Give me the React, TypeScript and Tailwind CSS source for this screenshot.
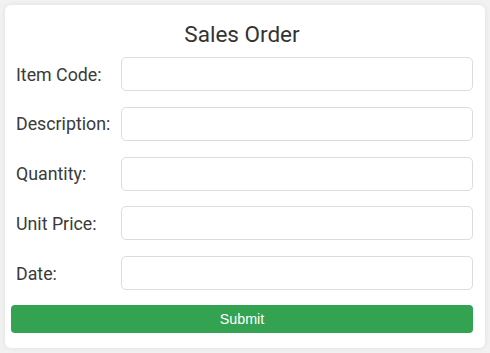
import React from 'react';

const fields = ['Item Code:', 'Description:', 'Quantity:', 'Unit Price:', 'Date:'];

export default function App() {
  return (
    <div className="min-h-[353px] w-[490px] bg-[#f2f2f2] pt-[5px] pl-[5px] font-['Roboto',sans-serif]">
      <div className="w-[480px] rounded-md bg-white pt-[13px] pr-[12px] pb-[15px] pl-[6px] shadow-[0_0_6px_rgba(0,0,0,0.08)]">
        <h1 className="h-[32px] text-center text-[22.5px] leading-[32px] text-[#333]">Sales Order</h1>
        <form className="mt-[7px] flex flex-col gap-[15.75px]" onSubmit={(e) => e.preventDefault()}>
          {fields.map((label) => (
            <div key={label} className="flex items-center">
              <label className="w-[110px] pt-[2px] pl-[5px] text-[17.8px] text-[#3a3a3a]">{label}</label>
              <input
                type="text"
                className="h-[34px] w-[352px] rounded-[5px] border border-[#dcdcdc] bg-white px-2 outline-none"
              />
            </div>
          ))}
          <button
            type="submit"
            className="mt-[-1px] h-[28px] w-[462px] rounded-[4px] bg-[#33a352] pt-px font-['Liberation_Sans',sans-serif] text-[14.3px] text-white"
          >
            Submit
          </button>
        </form>
      </div>
    </div>
  );
}
